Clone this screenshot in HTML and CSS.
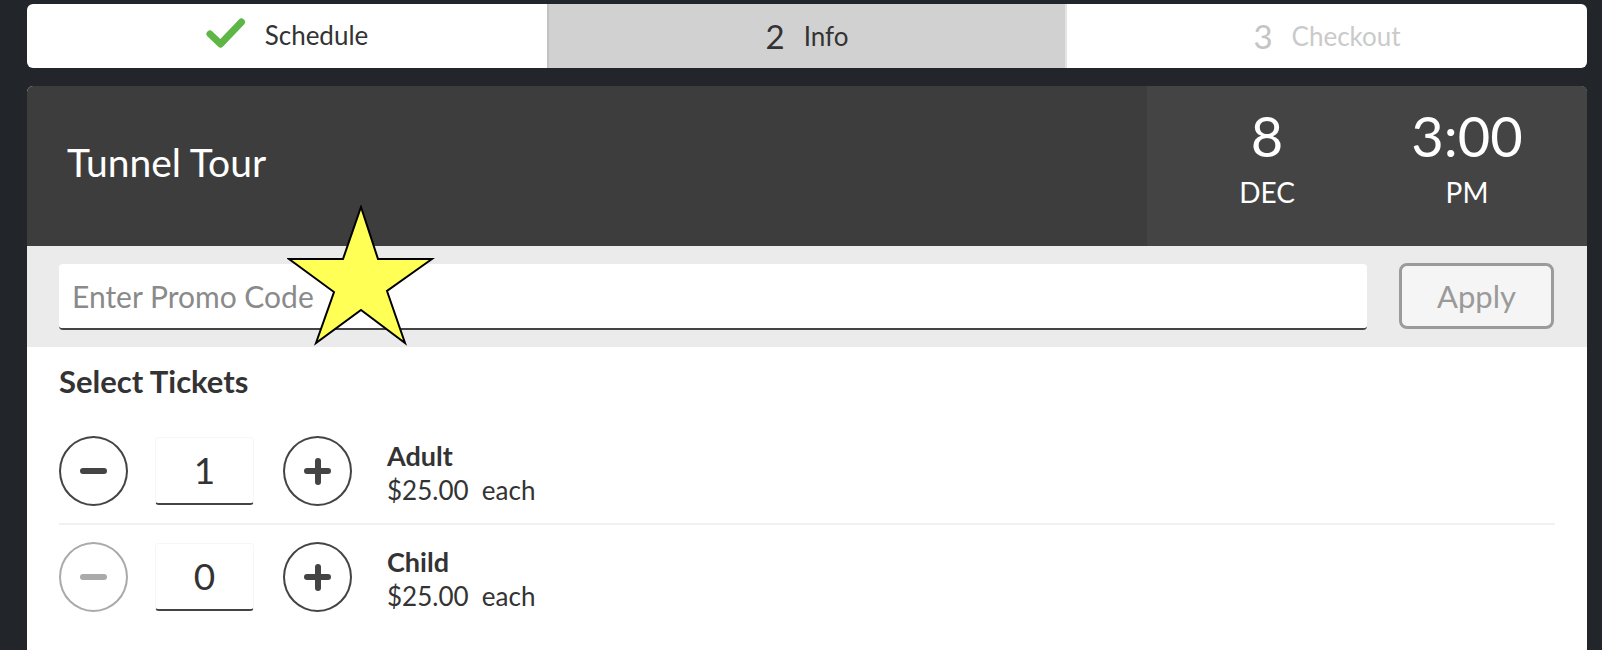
FILE: index.html
```html
<!DOCTYPE html>
<html lang="en">
<head>
<meta charset="utf-8">
<title>Tunnel Tour - Info</title>
<link rel="stylesheet" href="styles.css">
</head>
<body>
<div class="page">
  <nav class="steps">
    <div class="step step-done">
      <svg class="check" width="40" height="30" viewBox="0 0 40 30"><path d="M4 16 L14.5 26 L35.5 4" fill="none" stroke="#5db646" stroke-width="7" stroke-linecap="round" stroke-linejoin="round"/></svg>
      <span class="step-label">Schedule</span>
    </div>
    <div class="step step-active">
      <span class="step-num">2</span>
      <span class="step-label">Info</span>
    </div>
    <div class="step step-todo">
      <span class="step-num">3</span>
      <span class="step-label">Checkout</span>
    </div>
  </nav>

  <section class="panel">
    <header class="panel-head">
      <h1 class="title">Tunnel Tour</h1>
      <div class="when">
        <div class="when-item">
          <div class="when-big">8</div>
          <div class="when-small">DEC</div>
        </div>
        <div class="when-item">
          <div class="when-big">3:00</div>
          <div class="when-small">PM</div>
        </div>
      </div>
    </header>

    <div class="promo">
      <input class="promo-input" type="text" placeholder="Enter Promo Code">
      <button class="promo-btn" type="button">Apply</button>
    </div>

    <div class="tickets">
      <h2 class="tickets-title">Select Tickets</h2>
      <div class="ticket-row">
        <button class="round-btn" type="button" aria-label="Remove"><span class="bar"></span></button>
        <div class="count">1</div>
        <button class="round-btn" type="button" aria-label="Add"><span class="bar"></span><span class="bar bar-v"></span></button>
        <div class="ticket-info">
          <div class="ticket-name">Adult</div>
          <div class="ticket-price">$25.00&nbsp; each</div>
        </div>
      </div>
      <div class="ticket-row">
        <button class="round-btn round-btn-off" type="button" aria-label="Remove"><span class="bar"></span></button>
        <div class="count">0</div>
        <button class="round-btn" type="button" aria-label="Add"><span class="bar"></span><span class="bar bar-v"></span></button>
        <div class="ticket-info">
          <div class="ticket-name">Child</div>
          <div class="ticket-price">$25.00&nbsp; each</div>
        </div>
      </div>
    </div>
  </section>

  <svg class="star" width="148" height="141" viewBox="0 0 148 141"><polygon points="74,2 91,54 145,54 100,86 118,138 74,105 29,138 47,87 2,54 56,54" fill="#ffff55" stroke="#000" stroke-width="2"/></svg>
</div>
</body>
</html>
```

FILE: styles.css
```css
* { box-sizing: border-box; }

html, body {
  margin: 0;
  background: #222529;
}

body {
  font-family: Lato, "Noto Sans", sans-serif;
  color: #333;
}

.page {
  position: relative;
  display: flex;
  flex-direction: column;
  padding: 4px 15px 0 27px;
  height: 650px;
  overflow: hidden;
}

/* ---------- steps ---------- */
.steps {
  display: flex;
  flex: none;
  height: 64px;
  background: #fff;
  border-radius: 6px;
  overflow: hidden;
}

.step {
  flex: 1 1 0;
  display: flex;
  align-items: center;
  justify-content: center;
  gap: 19px;
}

.check { display: block; margin-top: -6px; }

.step-label {
  font-size: 26px;
  line-height: 1;
}

.step-num {
  font-size: 33px;
  line-height: 1;
}

.step-done .step-label { margin-top: -2px; }

.step-active {
  background: #d1d1d1;
  box-shadow: inset 2px 0 0 #c2c2c2, inset -2px 0 0 #e4e4e4;
  color: #333;
}

.step-todo { color: #cacaca; }
.step-todo .step-num { color: #c4c4c4; }

/* ---------- panel ---------- */
.panel {
  flex: 1;
  margin-top: 18px;
  border-radius: 6px 6px 0 0;
  overflow: hidden;
  background: #fff;
}

.panel-head {
  display: flex;
  height: 160px;
  background: #3d3d3d;
}

.title {
  flex: 1;
  margin: 0;
  padding: 57px 0 0 40px;
  font-size: 39px;
  font-weight: 400;
  line-height: 1;
  color: #fff;
}

.when {
  width: 440px;
  background: #444;
  display: flex;
  justify-content: space-between;
  padding: 22px 40px 0;
}

.when-item {
  width: 160px;
  text-align: center;
  color: #fff;
}

.when-big {
  font-size: 56px;
  line-height: 1;
}

.when-small {
  margin-top: 14px;
  font-size: 28px;
  line-height: 1;
}

/* ---------- promo ---------- */
.promo {
  display: flex;
  gap: 32px;
  padding: 18px 33px 17px 32px;
  background: #ebebeb;
}

.promo-input {
  flex: 1;
  height: 66px;
  border: none;
  border-bottom: 2px solid #444;
  border-radius: 4px;
  background: #fff;
  padding: 0 0 0 13px;
  font-family: Lato, sans-serif;
  font-size: 30px;
  color: #333;
  outline: none;
}

.promo-input::placeholder { color: #8a8a8a; }

.promo-btn {
  width: 155px;
  height: 66px;
  margin-top: -1px;
  border: 3px solid #9b9b9b;
  border-radius: 8px;
  background: #f5f5f5;
  color: #9a9a9a;
  font-family: Lato, sans-serif;
  font-size: 31px;
  padding: 0;
}

/* ---------- tickets ---------- */
.tickets {
  padding: 0 32px 0 32px;
}

.tickets-title {
  margin: 19px 0 22px;
  font-size: 31px;
  font-weight: 700;
  line-height: 1;
  color: #333;
}

.ticket-row {
  display: flex;
  align-items: center;
  padding: 16px 0;
  border-bottom: 2px solid #f1f1f1;
}

.ticket-row:last-child { border-bottom: none; }

.round-btn {
  position: relative;
  width: 69px;
  height: 70px;
  border: 2px solid #444;
  border-radius: 50%;
  background: #fff;
  padding: 0;
  flex: none;
}

.round-btn-off { border-color: #aaa; }

.bar {
  position: absolute;
  left: 50%;
  top: 50%;
  width: 27px;
  height: 6px;
  margin: -3px 0 0 -13.5px;
  border-radius: 3px;
  background: #444;
}

.bar-v {
  width: 6px;
  height: 27px;
  margin: -13.5px 0 0 -3px;
}

.round-btn-off .bar { background: #aaa; }

.count {
  width: 99px;
  height: 68px;
  margin: 0 29px 0 27px;
  border: 1px solid #f6f6f6;
  border-bottom: 2px solid #444;
  border-radius: 4px;
  display: flex;
  align-items: center;
  justify-content: center;
  font-size: 37px;
  line-height: 1;
  padding-bottom: 3px;
  color: #333;
}

.ticket-info {
  margin-left: 35px;
  padding-top: 4px;
}

.ticket-name {
  font-size: 27px;
  font-weight: 700;
  line-height: 34px;
}

.ticket-price {
  font-size: 26px;
  line-height: 34px;
}

/* ---------- annotation star ---------- */
.star {
  position: absolute;
  left: 287px;
  top: 205px;
}
```
